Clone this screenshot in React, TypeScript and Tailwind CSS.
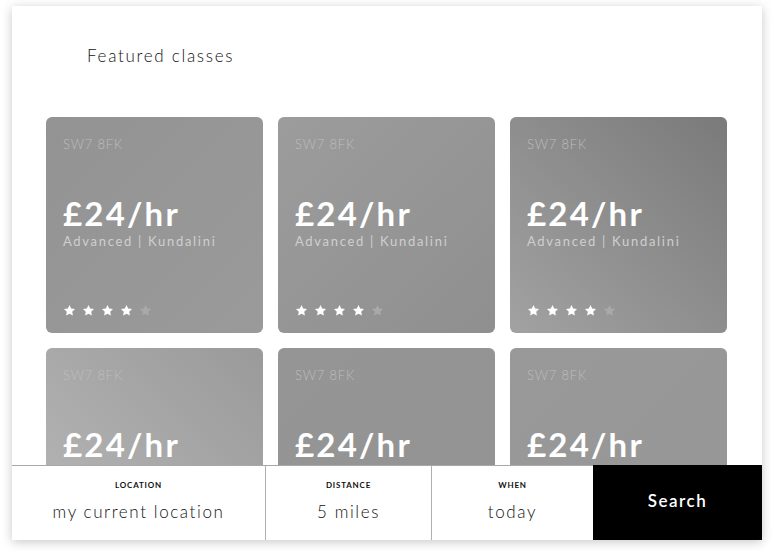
import React from "react";

const cards = [
  "bg-gradient-to-br from-[#939393] to-[#9a9a9a]",
  "bg-gradient-to-br from-[#9c9c9c] to-[#8f8f8f]",
  "bg-gradient-to-bl from-[#7a7a7a] to-[#a2a2a2]",
  "bg-gradient-to-tr from-[#b8b8b8] to-[#9a9a9a]",
  "bg-gradient-to-br from-[#959595] to-[#939393]",
  "bg-gradient-to-br from-[#999999] to-[#969696]",
];

function Star({ filled }: { filled: boolean }) {
  return (
    <svg width="13" height="13" viewBox="0 0 24 24" className={filled ? "fill-white" : "fill-[#a9a9a9]"}>
      <path d="M12 1.8l3.1 6.6 7.1.9-5.2 4.9 1.3 7.1L12 17.8l-6.3 3.5 1.3-7.1-5.2-4.9 7.1-.9z" />
    </svg>
  );
}

function Card({ bg }: { bg: string }) {
  return (
    <div className={`h-[216px] rounded-[6px] ${bg} px-[17px] pt-[19px] flex flex-col`}>
      <div className="text-[13px] text-[#bdbdbd] font-light tracking-[0.8px] leading-[16px]">SW7 8FK</div>
      <div className="mt-[43px] text-[33px] font-bold text-white leading-[36px] tracking-[2.2px]">£24/hr</div>
      <div className="mt-[2px] text-[13px] text-[#cfcfcf] tracking-[1.7px] leading-[16px]">Advanced | Kundalini</div>
      <div className="mt-[55px] flex gap-[6px]">
        <Star filled />
        <Star filled />
        <Star filled />
        <Star filled />
        <Star filled={false} />
      </div>
    </div>
  );
}

export default function App() {
  return (
    <div className="w-[774px] h-[558px] bg-white pt-[6px] pl-[12px]" style={{ fontFamily: "Lato, 'Open Sans', sans-serif" }}>
      <div className="w-[750px] h-[534px] bg-white shadow-[0_2px_10px_rgba(0,0,0,0.22)] flex flex-col overflow-hidden">
        <div className="h-[111px] shrink-0 pl-[75px] pt-[39px]">
          <div className="text-[17px] font-light text-[#111] tracking-[1.7px] leading-[22px]">Featured classes</div>
        </div>
        <div className="flex-1 overflow-hidden px-[34px]">
          <div className="grid grid-cols-3 gap-[15px] w-[681px]">
            {cards.map((bg, i) => (
              <Card key={i} bg={bg} />
            ))}
          </div>
        </div>
        <div className="h-[75px] shrink-0 flex border-t border-[#a8a8a8]">
          <div className="w-[254px] border-r border-[#b0b0b0] flex flex-col items-center pt-[13px]">
            <div className="text-[8px] font-bold tracking-[0.8px] text-[#111] leading-[12px]">LOCATION</div>
            <div className="mt-[10px] text-[17px] font-light text-[#111] tracking-[1.6px] leading-[22px]">my current location</div>
          </div>
          <div className="w-[166px] border-r border-[#b0b0b0] flex flex-col items-center pt-[13px]">
            <div className="text-[8px] font-bold tracking-[0.8px] text-[#111] leading-[12px]">DISTANCE</div>
            <div className="mt-[10px] text-[17px] font-light text-[#111] tracking-[1.6px] leading-[22px]">5 miles</div>
          </div>
          <div className="w-[161px] flex flex-col items-center pt-[13px]">
            <div className="text-[8px] font-bold tracking-[0.8px] text-[#111] leading-[12px]">WHEN</div>
            <div className="mt-[10px] text-[17px] font-light text-[#111] tracking-[1.6px] leading-[22px]">today</div>
          </div>
          <div className="flex-1 bg-black flex items-center justify-center pb-[3px] -mt-px">
            <div className="text-[17px] font-semibold text-white tracking-[1.5px]">Search</div>
          </div>
        </div>
      </div>
    </div>
  );
}
